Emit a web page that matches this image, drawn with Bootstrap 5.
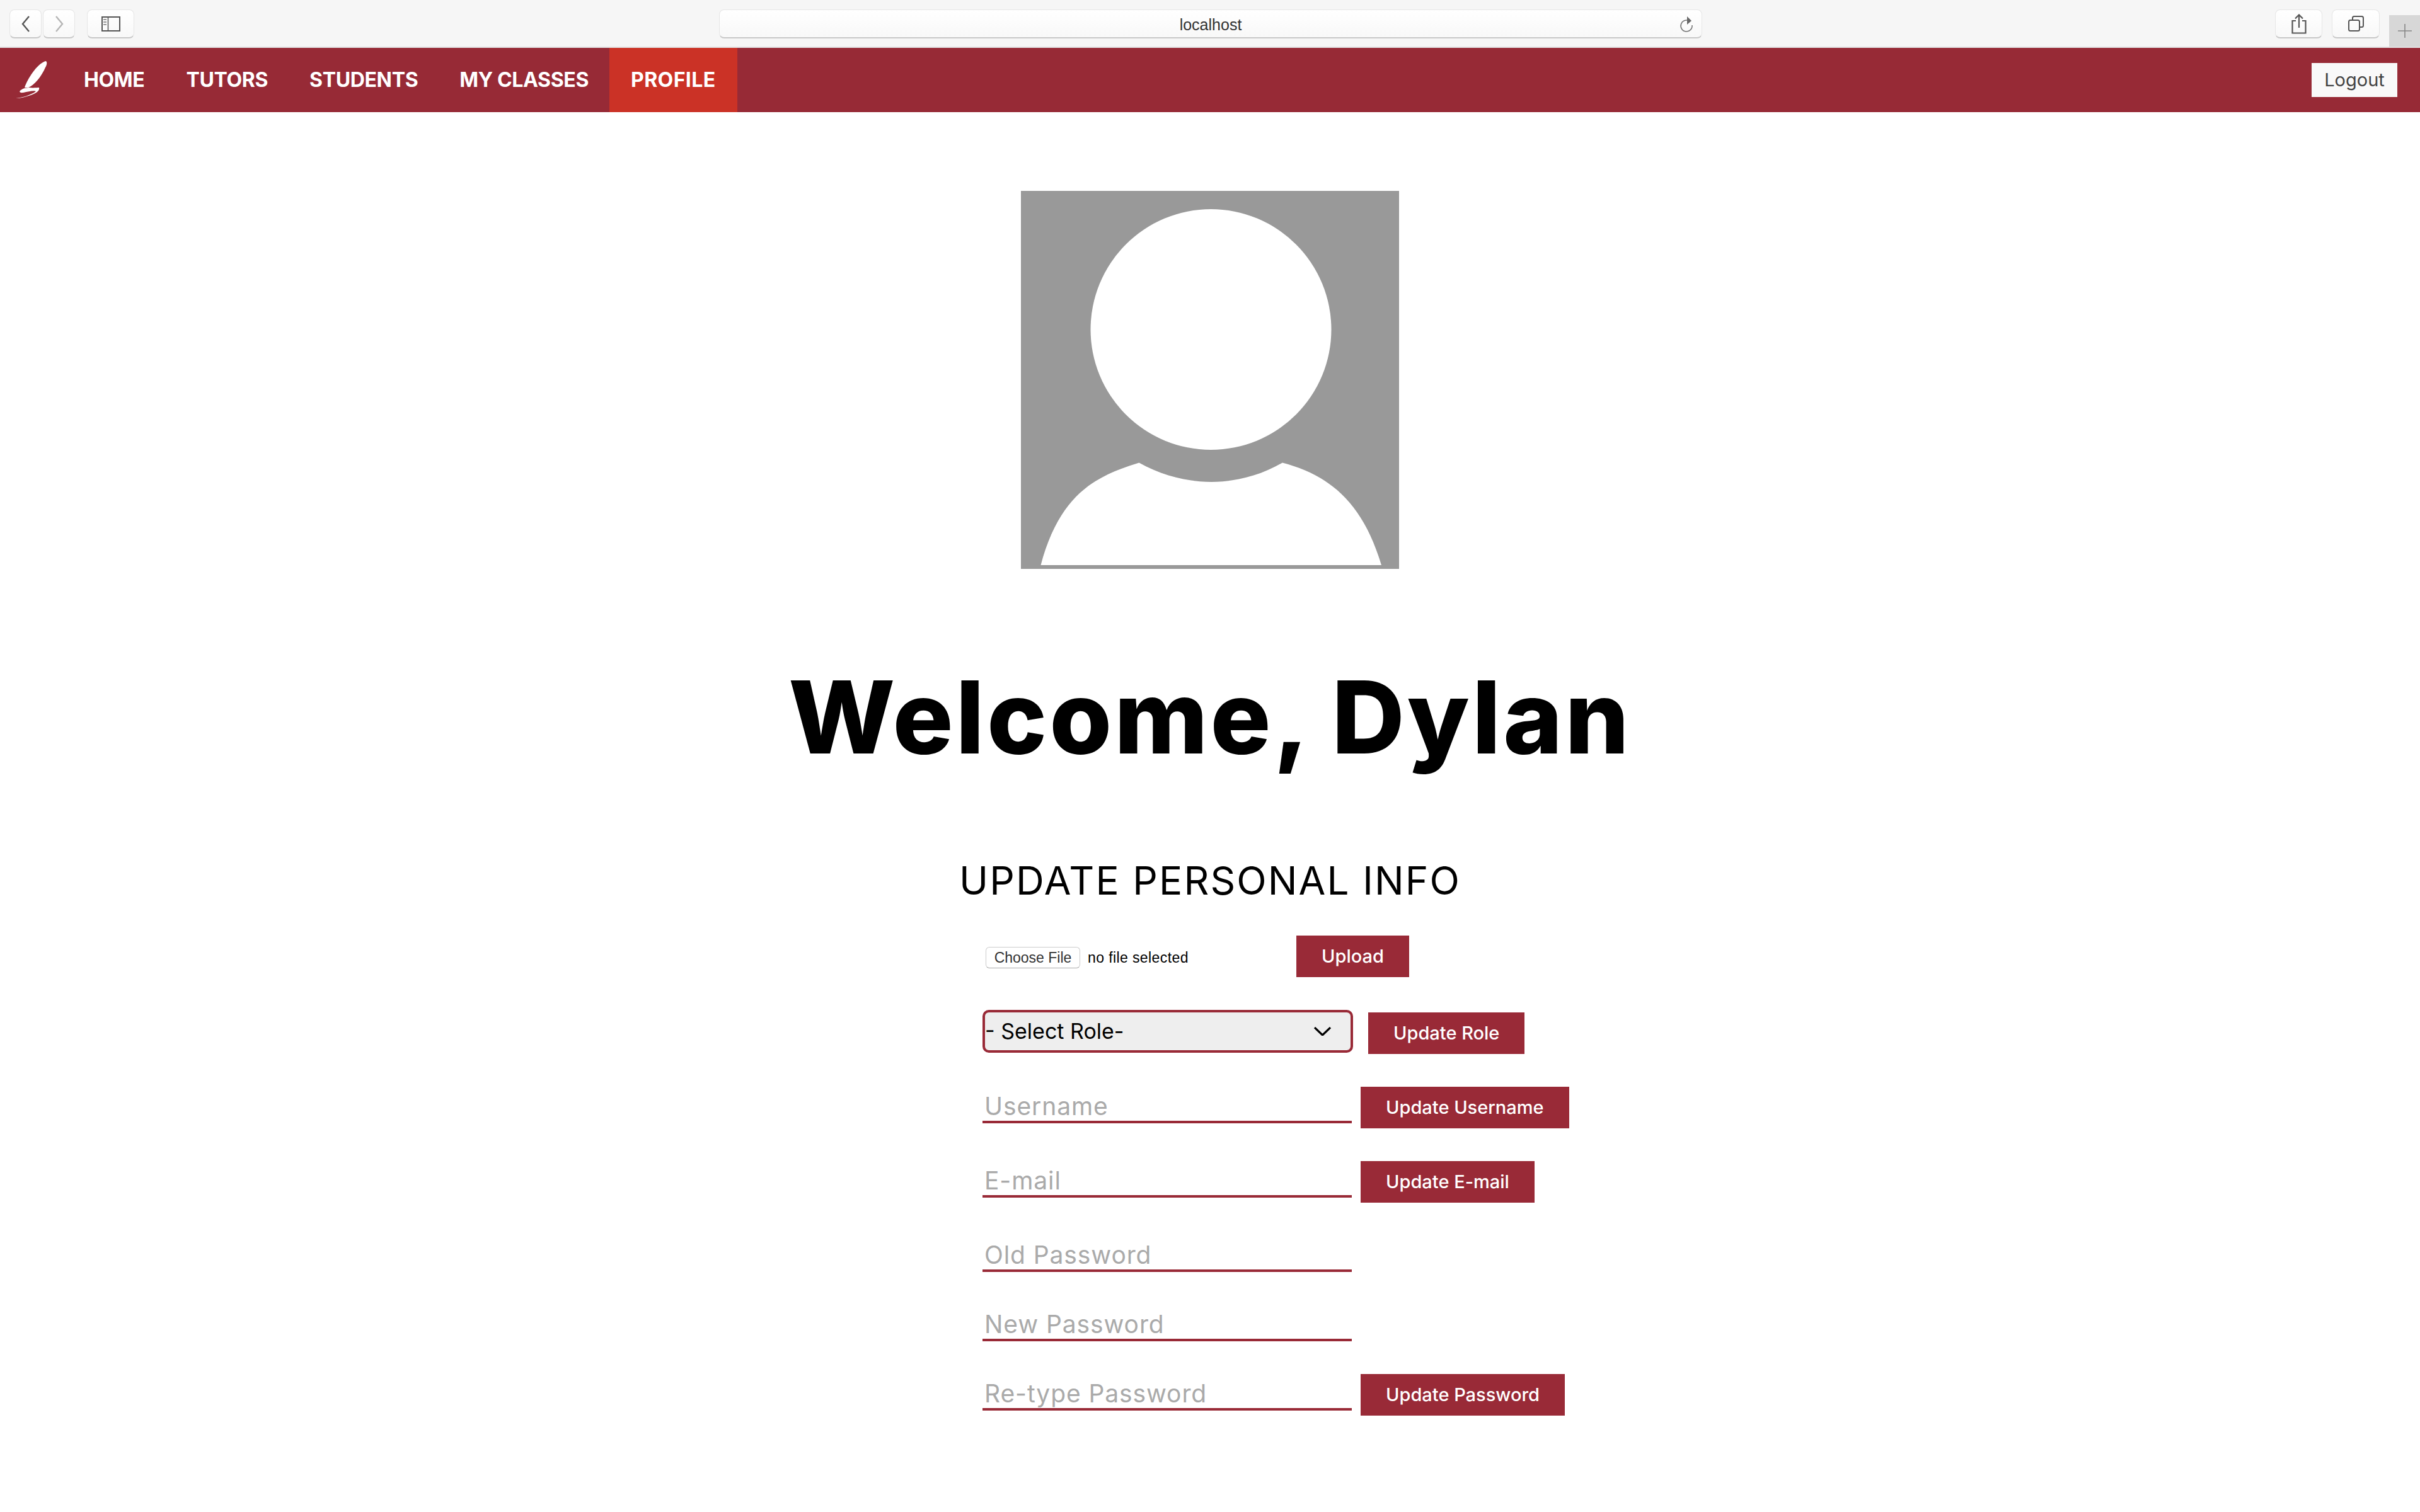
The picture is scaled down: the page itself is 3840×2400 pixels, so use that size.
<!DOCTYPE html>
<html lang="en">
<head>
    <meta charset="UTF-8">
    <meta name="viewport" content="width=device-width, initial-scale=1.0">
    <title>Profile</title>
    <link rel="stylesheet" href="https://cdn.jsdelivr.net/npm/bootstrap@5.3.0/dist/css/bootstrap.min.css">
    <style>
        body { font-family: Inter, "Liberation Sans", sans-serif; background: #fff; color: #000; }

        /* safari toolbar */
        .safari-bar { height: 76px; background: #f6f6f6; border-bottom: 2px solid #e2e2e2; padding: 15px 0 0 15px; align-items: flex-start; }
        .tool-btn { height: 46px; background: linear-gradient(#fff, #f8f8f8); border: 1px solid #e6e6e6; border-bottom: 2px solid #c8c8c8; border-radius: 8px; display: flex; align-items: center; justify-content: center; flex: none; }
        .tool-back, .tool-forward { width: 51px; }
        .tool-forward { margin-left: 2px; }
        .tool-side { width: 75px; margin-left: 19px; }
        .url-box { width: 1560px; margin-left: 928px; position: relative; font: 25px "Liberation Sans", sans-serif; color: #333; padding-top: 4px; }
        .url-reload { position: absolute; right: 13px; top: 8px; }
        .tool-share { width: 75px; margin-left: 909px; }
        .tool-tabs { width: 76px; margin-left: 15px; }
        .tool-plus { width: 50px; height: 50px; margin-top: 9px; margin-left: 15px; background: #d7d7d7; flex: none; display: flex; align-items: center; justify-content: center; }

        /* nav */
        .top-nav { height: 102px; background: #972a36; padding: 0; }
        .top-nav .logo-link { width: 100px; padding: 0 0 0 25px; margin: 0; }
        .top-nav.navbar-expand .navbar-nav .nav-link { color: #fff; font-size: 32px; font-weight: 700; line-height: 102px; padding: 0 33px; letter-spacing: -0.35px; }
        .top-nav.navbar-expand .navbar-nav .nav-link.active { background: #cb3226; color: #fff; padding: 0 34px; letter-spacing: 0.4px; }
        .logout-btn { width: 136px; height: 54px; background: #f9f9f9; color: #444; border: 0; border-radius: 0; font-size: 29px; padding: 0; margin-right: 36px; }

        /* page */
        .avatar-pic { display: block; width: 600px; height: 600px; margin: 125px auto 0; }
        .welcome-title { font-size: 160px; font-weight: 850; line-height: 1; margin: 155px 0 0; text-align: center; letter-spacing: 4px; }
        .section-title { font-size: 62px; font-weight: 400; line-height: 1; margin: 149px 0 0; text-align: center; letter-spacing: 2.100px; }
        .info-form { margin-left: calc(50% - 361px); }
        .info-row { align-items: flex-end; }
        .upload-row { margin-top: 56px; }
        .role-row, .user-row, .mail-row, .new-row { margin-top: 52px; }
        .old-row { margin-top: 60px; }
        .retype-row { margin-top: 44px; }
        .red-btn { height: 66px; background: #992a37; color: #fff; border: 0; border-radius: 0; font-size: 29px; font-weight: 500; padding: 0 40px; flex: none; }
        .red-btn:hover { background: #992a37; color: #fff; }
        .file-pick { width: 498px; padding-left: 5px; align-self: center; margin-top: 4px; align-items: center; font: 23px "Liberation Sans", sans-serif; letter-spacing: 0.4px; }
        .file-btn { width: 150px; height: 34px; background: #fff; border: 1px solid #ccc; border-bottom-color: #aaa; border-radius: 6px; font: 23px "Liberation Sans", sans-serif; color: #333; padding: 0; margin-right: 12px; }
        .role-select { width: 588px; height: 68px; border: 4px solid #992a37; border-radius: 10px; background-color: #eee; font-size: 34px; line-height: 1; color: #000; padding: 0; margin: 0 24px 2px 0;
            background-image: url("data:image/svg+xml,%3csvg xmlns='http://www.w3.org/2000/svg' viewBox='0 0 27 14'%3e%3cpath fill='none' stroke='%23000' stroke-width='3.2' d='M1 1l12.5 12L26 1'/%3e%3c/svg%3e"); background-size: 27px 14px; background-position: right 31px center; }
        .line-input { width: 586px; height: 50px; border: 0; border-bottom: 4px solid #992a37; border-radius: 0; font-size: 39px; line-height: 1; letter-spacing: 0.9px; padding: 0 0 2px 3px; margin: 0 14px 8px 0; background: transparent; }
        .line-input::placeholder { color: #aaa; opacity: 1; }
    </style>
</head>
<body>
    <div class="safari-bar d-flex">
        <div class="tool-btn tool-back">
            <svg width="14" height="26" viewBox="0 0 14 26"><path d="M12 1L2 13l10 12" fill="none" stroke="#555" stroke-width="2.4"/></svg>
        </div>
        <div class="tool-btn tool-forward">
            <svg width="14" height="26" viewBox="0 0 14 26"><path d="M2 1l10 12L2 25" fill="none" stroke="#b5b5b5" stroke-width="2.4"/></svg>
        </div>
        <div class="tool-btn tool-side">
            <svg width="30" height="24" viewBox="0 0 30 24"><rect x="1" y="1" width="28" height="22" fill="none" stroke="#555" stroke-width="2"/><path d="M10.5 1v22" stroke="#555" stroke-width="1.5"/><path d="M3 5h5M3 9h5M3 13h5" stroke="#999" stroke-width="2"/></svg>
        </div>
        <div class="tool-btn url-box">
            localhost
            <svg class="url-reload" width="22" height="28" viewBox="0 0 22 28"><path d="M16 9.5A9 9 0 1 0 20 16" fill="none" stroke="#777" stroke-width="1.6"/><path d="M12 2l7 7-7 6z" fill="#666"/></svg>
        </div>
        <div class="tool-btn tool-share">
            <svg width="24" height="32" viewBox="0 0 24 32"><path d="M7 11H1.500v19.500h21V11H17M12 22V2M6 7.500L12 1.500l6 6" fill="none" stroke="#555" stroke-width="2.200"/></svg>
        </div>
        <div class="tool-btn tool-tabs">
            <svg width="25" height="25" viewBox="0 0 25 25"><rect x="1" y="7" width="17" height="17" rx="2.500" fill="none" stroke="#555" stroke-width="2"/><path d="M7 6V3.500Q7 1 9.500 1H21.500Q24 1 24 3.500V15.500Q24 18 21.500 18H19" fill="none" stroke="#555" stroke-width="2"/></svg>
        </div>
        <div class="tool-plus">
            <svg width="24" height="24" viewBox="0 0 24 24"><path d="M12 1v22M1 12h22" stroke="#888" stroke-width="1.600"/></svg>
        </div>
    </div>

    <nav class="navbar navbar-expand top-nav">
        <a class="navbar-brand logo-link" href="#">
            <svg width="50" height="60" viewBox="0 0 50 60" class="d-block"><path d="M47 0C50 0 50 5 47 10 41 24 30 38 20 42L14 42C19 28 33 5 47 0ZM21 42C27 43 34 42 37 42 38 46 35 50 24 54 15 57 7 59 0 59 10 58 24 54 32 48 30 46 20 48 12 50 5 51 3 47 14 43Z" fill="#fff"/></svg>
        </a>
        <ul class="navbar-nav">
            <li class="nav-item"><a class="nav-link" href="#">HOME</a></li>
            <li class="nav-item"><a class="nav-link" href="#">TUTORS</a></li>
            <li class="nav-item"><a class="nav-link" href="#">STUDENTS</a></li>
            <li class="nav-item"><a class="nav-link" href="#">MY CLASSES</a></li>
            <li class="nav-item"><a class="nav-link active" href="#">PROFILE</a></li>
        </ul>
        <button class="btn logout-btn ms-auto">Logout</button>
    </nav>

    <svg class="avatar-pic" viewBox="0 0 600 600">
        <rect width="600" height="600" fill="#999"/>
        <circle cx="301.500" cy="220" r="191" fill="#fff"/>
        <path d="M31.500 594C62 480 120 452 187.500 431.500 260 472 345 472 415 431.500 485 450 541 490 572 594Z" fill="#fff"/>
    </svg>

    <h1 class="welcome-title">Welcome, Dylan</h1>
    <h2 class="section-title">UPDATE PERSONAL INFO</h2>

    <form class="info-form">
        <div class="info-row d-flex upload-row">
            <div class="file-pick d-flex">
                <button type="button" class="btn file-btn">Choose File</button>
                <span>no file selected</span>
            </div>
            <button type="button" class="btn red-btn">Upload</button>
        </div>
        <div class="info-row d-flex role-row">
            <select class="form-select role-select">
                <option>- Select Role-</option>
            </select>
            <button type="button" class="btn red-btn">Update Role</button>
        </div>
        <div class="info-row d-flex user-row">
            <input class="form-control line-input" type="text" placeholder="Username">
            <button type="button" class="btn red-btn">Update Username</button>
        </div>
        <div class="info-row d-flex mail-row">
            <input class="form-control line-input" type="text" placeholder="E-mail">
            <button type="button" class="btn red-btn">Update E-mail</button>
        </div>
        <div class="info-row d-flex old-row">
            <input class="form-control line-input" type="password" placeholder="Old Password">
        </div>
        <div class="info-row d-flex new-row">
            <input class="form-control line-input" type="password" placeholder="New Password">
        </div>
        <div class="info-row d-flex retype-row">
            <input class="form-control line-input" type="password" placeholder="Re-type Password">
            <button type="button" class="btn red-btn">Update Password</button>
        </div>
    </form>
</body>
</html>
